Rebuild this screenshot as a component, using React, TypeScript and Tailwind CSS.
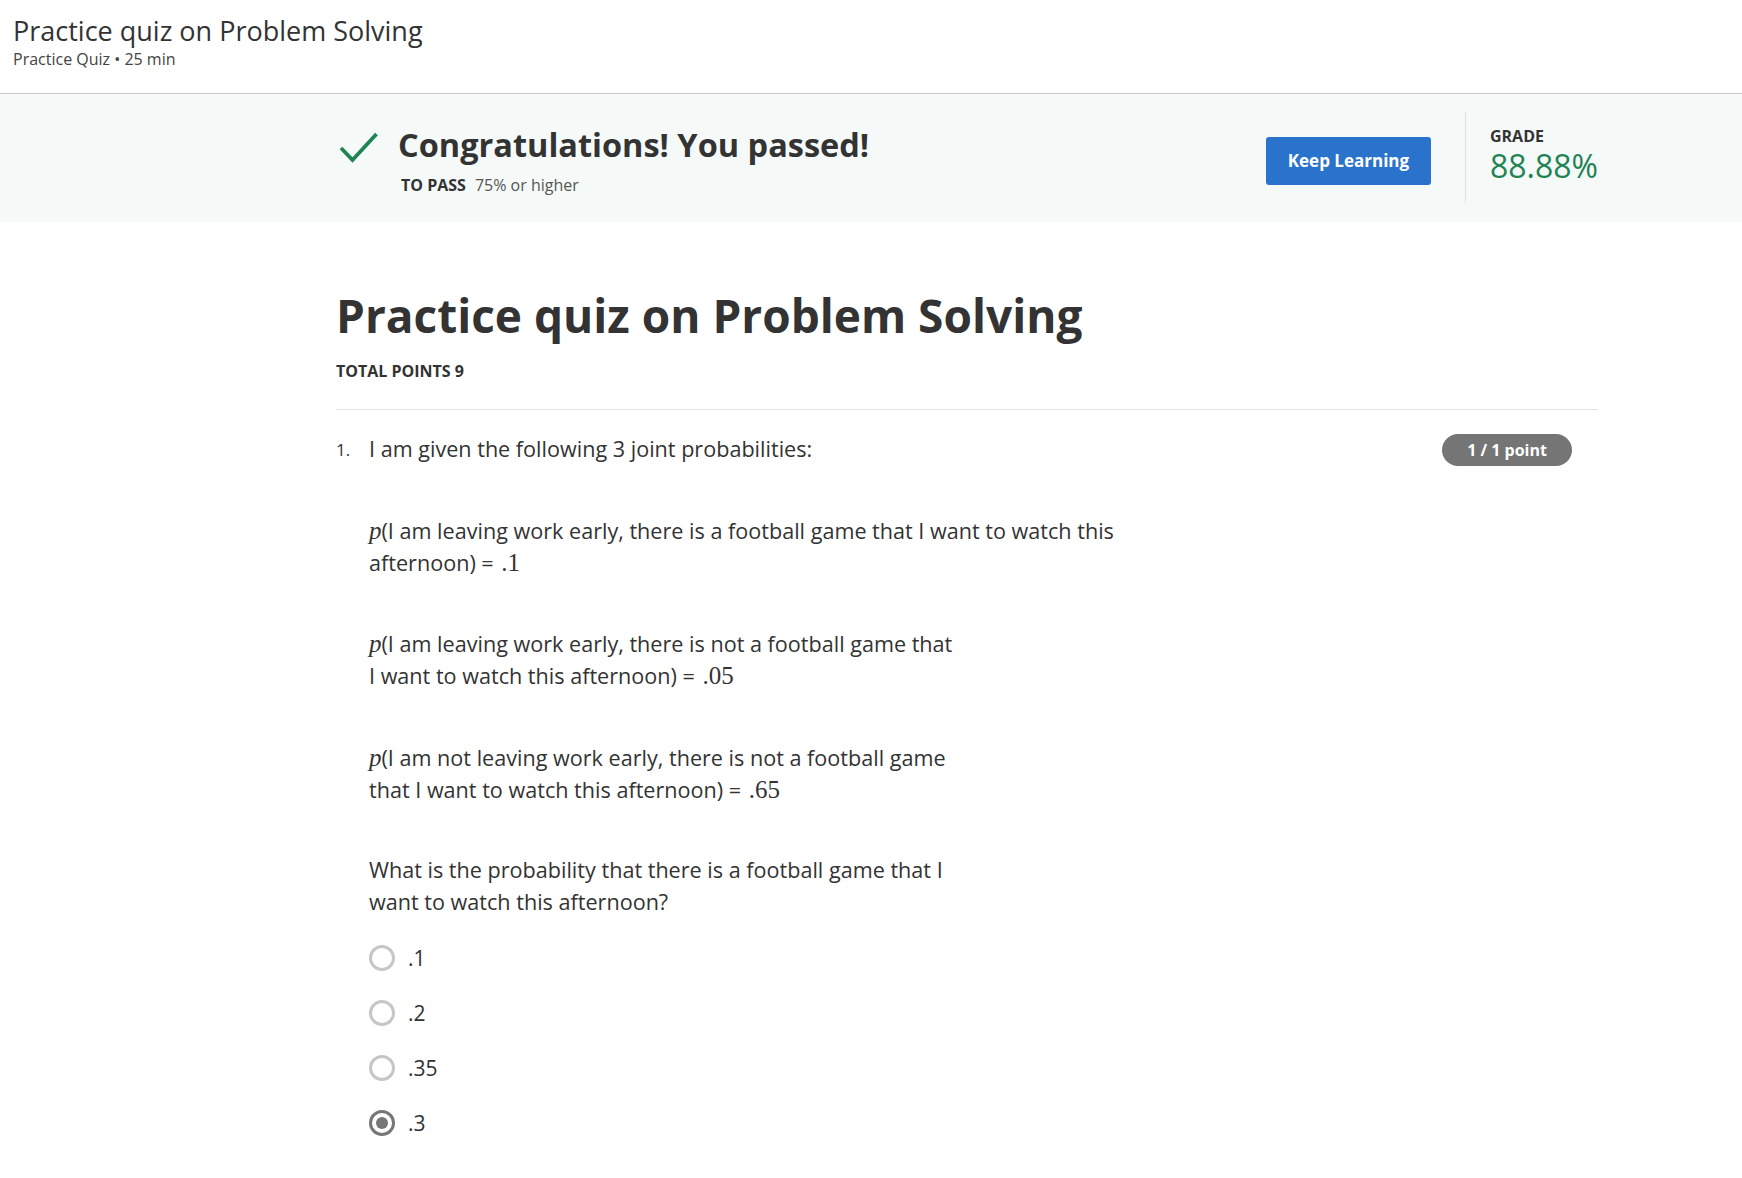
import React from 'react';

const serif = "font-['Liberation_Serif','DejaVu_Serif',serif]";

const Math: React.FC<{ children: React.ReactNode; italic?: boolean }> = ({ children, italic }) => (
  <span className={`${serif} text-[25px] ${italic ? 'italic' : 'ml-[2px]'}`}>{children}</span>
);

const Radio: React.FC<{ label: string; checked?: boolean }> = ({ label, checked }) => (
  <div className="flex h-[55px] items-center">
    {checked ? (
      <span className="flex h-[26px] w-[26px] items-center justify-center rounded-full border-[3px] border-[#767676]">
        <span className="h-[12px] w-[12px] rounded-full bg-[#767676]"></span>
      </span>
    ) : (
      <span className="h-[26px] w-[26px] rounded-full border-[3px] border-[#c6c6c6]"></span>
    )}
    <span className="ml-[13px] text-[21px] leading-[32px]">{label}</span>
  </div>
);

const App: React.FC = () => {
  return (
    <div className="min-h-screen bg-white font-['Open_Sans',sans-serif] text-[#333]">
      {/* Page header */}
      <header className="h-[94px] border-b border-[#c8c8c8] px-[13px] pt-[14px]">
        <h1 className="text-[27px] leading-[34px] text-[#333]">Practice quiz on Problem Solving</h1>
        <p className="text-[16px] leading-[22px] text-[#444]">Practice Quiz • 25 min</p>
      </header>

      {/* Result banner */}
      <section className="flex h-[128px] items-start bg-[#f5faf9] pl-[336px] pr-[144px]">
        <div className="mt-[31px] flex items-start">
          <svg className="ml-[3px] mt-[6px]" width="40" height="32" viewBox="0 0 40 32" fill="none">
            <polyline points="2,17 13.5,29 37.5,3" stroke="#1f8354" strokeWidth="3.8" />
          </svg>
          <div className="ml-[19px]">
            <div className="text-[32.5px] font-bold leading-[40px] text-[#333]">Congratulations! You passed!</div>
            <div className="ml-[3px] mt-[9px] flex text-[16px] leading-[22px]">
              <span className="font-bold text-[#333]">TO PASS</span>
              <span className="ml-[9px] text-[#555]">75% or higher</span>
            </div>
          </div>
        </div>

        <div className="ml-auto flex items-start">
          <button className="mt-[43px] h-[48px] w-[165px] rounded-[3px] bg-[#2a73cc] text-[17px] font-bold text-white">
            Keep Learning
          </button>
          <div className="ml-[34px] mt-[18px] h-[91px] w-px bg-[#dde3e2]"></div>
          <div className="ml-[24px] mt-[32px]">
            <div className="text-[16px] font-bold leading-[20px] text-[#333]">GRADE</div>
            <div className="text-[32px] leading-[40px] text-[#1f8354]">88.88%</div>
          </div>
        </div>
      </section>

      {/* Quiz body */}
      <main className="pl-[336px] pr-[144px] pt-[65px]">
        <h2 className="text-[46px] font-bold leading-[56px] text-[#333]">Practice quiz on Problem Solving</h2>
        <div className="mt-[18px] text-[16px] font-bold leading-[20px] text-[#333]">TOTAL POINTS 9</div>
        <div className="mt-[28px] h-px bg-[#e1e1e1]"></div>

        <div className="mt-[23px] flex items-start pr-[26px]">
          <div className="mt-[1px] w-[33px] text-[17px] leading-[32px]">1.</div>
          <div className="flex-1 text-[21.6px] leading-[32px]">
            <p>I am given the following 3 joint probabilities:</p>

            <p className="mt-[50px]">
              <Math italic>p</Math>(I am leaving work early, there is a football game that I want to watch this
              <br />
              afternoon) = <Math>.1</Math>
            </p>

            <p className="mt-[49px]">
              <Math italic>p</Math>(I am leaving work early, there is not a football game that
              <br />I want to watch this afternoon) = <Math>.05</Math>
            </p>

            <p className="mt-[50px]">
              <Math italic>p</Math>(I am not leaving work early, there is not a football game
              <br />
              that I want to watch this afternoon) = <Math>.65</Math>
            </p>

            <p className="mt-[48px]">
              What is the probability that there is a football game that I
              <br />
              want to watch this afternoon?
            </p>

            <div className="mt-[12px]">
              <Radio label=".1" />
              <Radio label=".2" />
              <Radio label=".35" />
              <Radio label=".3" checked />
            </div>
          </div>
          <div className="mt-[1px] flex h-[32px] w-[130px] items-center justify-center rounded-full bg-[#757575] text-[16px] font-bold text-white">
            1 / 1 point
          </div>
        </div>
      </main>
    </div>
  );
};

export default App;
